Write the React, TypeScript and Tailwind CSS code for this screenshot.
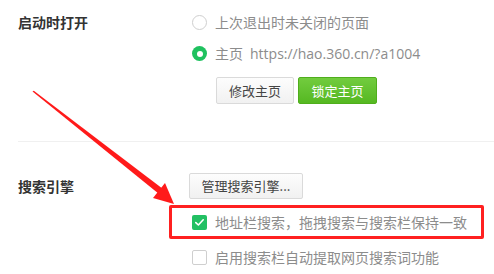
import React from "react";

function Radio({ checked }: { checked?: boolean }) {
  if (checked) {
    return (
      <span className="flex h-[15px] w-[15px] items-center justify-center rounded-full bg-[#1fc15f]">
        <span className="h-[6px] w-[6px] rounded-full bg-white" />
      </span>
    );
  }
  return <span className="h-[15px] w-[15px] rounded-full border border-[#cfcfcf] bg-white" />;
}

function Checkbox({ checked }: { checked?: boolean }) {
  if (checked) {
    return (
      <span className="flex h-[15px] w-[15px] items-center justify-center rounded-[2px] bg-[#22c063]">
        <svg width="11" height="11" viewBox="0 0 11 11" fill="none">
          <path d="M1.8 5.6 L4.4 8 L9.2 2.8" stroke="white" strokeWidth="1.6" strokeLinecap="round" strokeLinejoin="round" />
        </svg>
      </span>
    );
  }
  return <span className="h-[15px] w-[15px] rounded-[2px] border border-[#cfcfcf] bg-white" />;
}

export default function App() {
  return (
    <div className="relative h-[274px] w-[494px] overflow-hidden bg-white font-['Noto_Sans_CJK_SC','Microsoft_YaHei',sans-serif] text-[14px] text-[#8c8c8c]">
      {/* Section 1 */}
      <div className="flex pl-[18px] pt-[7px]">
        <div className="w-[174px] pt-[4px] text-[14px] font-bold leading-[23px] text-[#333]">启动时打开</div>
        <div className="flex flex-col">
          <div className="flex h-[31px] items-center gap-[8px]">
            <Radio />
            <span>上次退出时未关闭的页面</span>
          </div>
          <div className="flex h-[31px] items-center gap-[8px]">
            <Radio checked />
            <span>
              主页<span className="ml-[7px] font-['Open_Sans',sans-serif] text-[14px]">https://hao.360.cn/?a1004</span>
            </span>
          </div>
          <div className="ml-[24px] mt-[8px] flex gap-[4px]">
            <button className="h-[27px] w-[78px] rounded-[2px] border border-[#dadada] bg-gradient-to-b from-[#fdfdfd] to-[#f1f1f1] text-[13px] text-[#444]">
              修改主页
            </button>
            <button className="h-[27px] w-[79px] rounded-[2px] border border-[#4fae1c] bg-gradient-to-b from-[#72cc3e] to-[#55b821] text-[13px] text-white">
              锁定主页
            </button>
          </div>
        </div>
      </div>

      {/* Divider */}
      <div className="ml-[18px] mt-[37px] h-px bg-[#f0f0f0]" />

      {/* Section 2 */}
      <div className="flex pl-[18px] pt-[31px]">
        <div className="w-[171px] pt-[1px] text-[14px] font-bold leading-[24px] text-[#333]">搜索引擎</div>
        <div className="flex flex-col">
          <button className="h-[26px] w-[114px] rounded-[2px] border border-[#dadada] bg-gradient-to-b from-[#fdfdfd] to-[#f1f1f1] text-[13px] text-[#444]">
            管理搜索引擎...
          </button>
          <div className="-ml-[20px] mt-[6px] flex h-[34px] w-[315px] items-center gap-[8px] rounded-[2px] border-[3px] border-[#ff2020] pl-[20px]">
            <Checkbox checked />
            <span>地址栏搜索，拖拽搜索与搜索栏保持一致</span>
          </div>
          <div className="ml-[3px] flex h-[36px] items-center gap-[8px]">
            <Checkbox />
            <span>启用搜索栏自动提取网页搜索词功能</span>
          </div>
        </div>
      </div>

      {/* Red arrow annotation */}
      <svg className="pointer-events-none absolute left-0 top-0" width="494" height="274" viewBox="0 0 494 274">
        <polygon points="32.5,91.5 33.8,90.8 163,189 159,194" fill="#ff1a1a" />
        <polygon points="174,204 165,183 153,198" fill="#ff1a1a" />
      </svg>
    </div>
  );
}
